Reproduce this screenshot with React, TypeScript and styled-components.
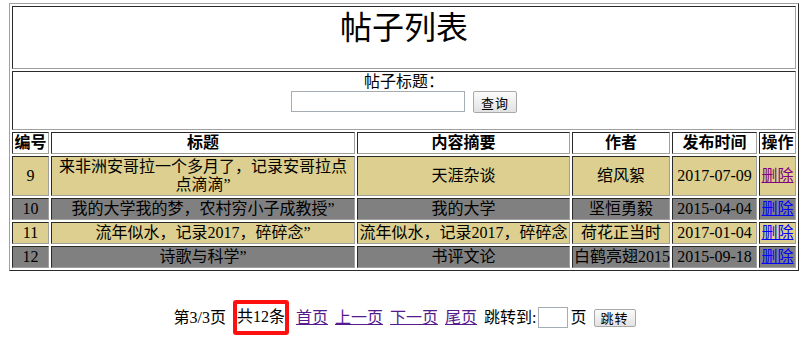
import React from "react";
import styled, { createGlobalStyle } from "styled-components";

const GlobalStyle = createGlobalStyle`
  html, body { margin: 0; padding: 0; background: #fff; }
  body {
    font-family: "Liberation Serif", "Noto Sans CJK SC", serif;
    font-size: 16px;
    color: #000;
  }
`;

const DARK = "#2a2a2a";
const LIGHT = "#a0a0a0";
const TAN = "#dccf8f";
const GREY = "#808080";

const Page = styled.div`
  width: 809px;
  padding-top: 3px;
`;

const ListTable = styled.table`
  width: 790px;
  margin-left: 9px;
  table-layout: fixed;
  border-collapse: separate;
  border-spacing: 2px;
  border: 1px solid;
  border-color: ${LIGHT} ${DARK} ${DARK} ${LIGHT};
`;

const Cell = styled.td<{ $bg?: string; $wrap?: boolean }>`
  border: 1px solid;
  border-color: ${DARK} ${LIGHT} ${LIGHT} ${DARK};
  padding: 1px;
  text-align: center;
  vertical-align: middle;
  line-height: 18px;
  white-space: ${(p) => (p.$wrap ? "normal" : "nowrap")};
  background: ${(p) => p.$bg ?? "transparent"};
`;

const HeadCell = styled.th`
  border: 1px solid;
  border-color: ${DARK} ${LIGHT} ${LIGHT} ${DARK};
  padding: 1px;
  text-align: center;
  line-height: 18px;
  font-weight: bold;
  white-space: nowrap;
`;

const Title = styled.h1`
  margin: 0 0 19px;
  font-size: 32px;
  line-height: 40px;
  font-weight: normal;
`;

const SearchForm = styled.form`
  margin: 0 0 15px;
  display: flex;
  flex-direction: column;
  align-items: center;
`;

const SearchLabel = styled.div`
  line-height: 18px;
`;

const SearchRow = styled.div`
  display: flex;
  align-items: flex-start;
  gap: 8px;
`;

const TextBox = styled.input<{ $w: number; $h: number }>`
  box-sizing: border-box;
  width: ${(p) => p.$w}px;
  height: ${(p) => p.$h}px;
  margin: 0;
  padding: 1px 2px;
  border: 1px solid #a5acb2;
  background: #fff;
  outline: none;
`;

const Btn = styled.button<{ $w: number; $h: number }>`
  box-sizing: border-box;
  width: ${(p) => p.$w}px;
  height: ${(p) => p.$h}px;
  margin: 0;
  padding: 0;
  border: 1px solid #a8a8a8;
  border-radius: 2px;
  background: linear-gradient(#fbfbfb, #e2e2e2);
  font-family: "Noto Sans CJK SC", sans-serif;
  font-size: 13px;
  line-height: 1;
  color: #000;
  letter-spacing: 1px;
`;

const DelLink = styled.a<{ $visited?: boolean }>`
  color: ${(p) => (p.$visited ? "#800080" : "#0000ff")};
  text-decoration: underline;
`;

const Pager = styled.div`
  margin-top: 29px;
  display: flex;
  justify-content: center;
  align-items: center;
  gap: 7px;
  line-height: 18px;
`;

const Mark = styled.span`
  border: 4px solid #ff1010;
  border-radius: 3px;
  padding: 4px 0 5px;
`;

const PageLink = styled.a`
  color: #551a8b;
  text-decoration: underline;
`;

const JumpGroup = styled.span`
  display: flex;
  align-items: center;
  gap: 2px;
`;

type Row = {
  id: string;
  title: string;
  summary: string;
  author: string;
  date: string;
  visited?: boolean;
};

const rows: Row[] = [
  { id: "9", title: "来非洲安哥拉一个多月了，记录安哥拉点点滴滴”", summary: "天涯杂谈", author: "绾风絮", date: "2017-07-09", visited: true },
  { id: "10", title: "我的大学我的梦，农村穷小子成教授”", summary: "我的大学", author: "坚恒勇毅", date: "2015-04-04" },
  { id: "11", title: "流年似水，记录2017，碎碎念”", summary: "流年似水，记录2017，碎碎念", author: "荷花正当时", date: "2017-01-04" },
  { id: "12", title: "诗歌与科学”", summary: "书评文论", author: "白鹤亮翅2015", date: "2015-09-18" },
];

const colWidths = [37, 304, 213, 98, 85, 37];
const heads = ["编号", "标题", "内容摘要", "作者", "发布时间", "操作"];

export default function App() {
  return (
    <Page>
      <GlobalStyle />
      <ListTable>
        <colgroup>
          {colWidths.map((w, i) => (
            <col key={i} style={{ width: w }} />
          ))}
        </colgroup>
        <tbody>
          <tr>
            <Cell colSpan={6} $wrap>
              <Title>帖子列表</Title>
            </Cell>
          </tr>
          <tr>
            <Cell colSpan={6} $wrap>
              <SearchForm onSubmit={(e) => e.preventDefault()}>
                <SearchLabel>帖子标题：</SearchLabel>
                <SearchRow>
                  <TextBox type="text" $w={174} $h={21} />
                  <Btn type="submit" $w={44} $h={22}>查询</Btn>
                </SearchRow>
              </SearchForm>
            </Cell>
          </tr>
          <tr>
            {heads.map((h) => (
              <HeadCell key={h}>{h}</HeadCell>
            ))}
          </tr>
          {rows.map((r, i) => {
            const bg = i % 2 === 0 ? TAN : GREY;
            return (
              <tr key={r.id}>
                <Cell $bg={bg}>{r.id}</Cell>
                <Cell $bg={bg} $wrap>{r.title}</Cell>
                <Cell $bg={bg}>{r.summary}</Cell>
                <Cell $bg={bg}>{r.author}</Cell>
                <Cell $bg={bg}>{r.date}</Cell>
                <Cell $bg={bg}>
                  <DelLink href="#" $visited={r.visited}>删除</DelLink>
                </Cell>
              </tr>
            );
          })}
        </tbody>
      </ListTable>
      <Pager>
        <span>第3/3页</span>
        <Mark>共12条</Mark>
        <PageLink href="#">首页</PageLink>
        <PageLink href="#">上一页</PageLink>
        <PageLink href="#">下一页</PageLink>
        <PageLink href="#">尾页</PageLink>
        <JumpGroup>
          <span>跳转到:</span>
          <TextBox type="text" $w={30} $h={21} />
          <span>页</span>
        </JumpGroup>
        <Btn type="button" $w={42} $h={18}>跳转</Btn>
      </Pager>
    </Page>
  );
}
